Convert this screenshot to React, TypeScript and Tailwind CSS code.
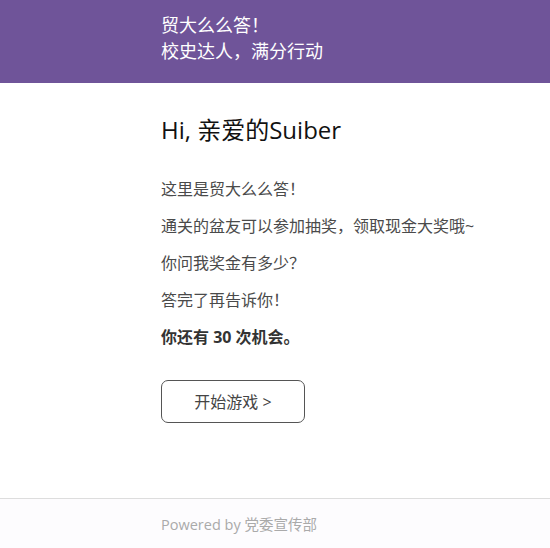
const font = { fontFamily: '"Open Sans", "Noto Sans CJK SC", sans-serif' };

const lines = [
  "这里是贸大么么答！",
  "通关的盆友可以参加抽奖，领取现金大奖哦~",
  "你问我奖金有多少？",
  "答完了再告诉你！",
];

export default function App() {
  return (
    <div className="w-[550px] h-[548px] bg-white flex flex-col" style={font}>
      <header className="h-[83px] bg-[#6f5499] pl-[161px] pt-3 text-[18px] leading-[26px] text-white">
        <div>贸大么么答！</div>
        <div>校史达人，满分行动</div>
      </header>

      <main className="flex-1 pl-[161px] pt-[31px]">
        <h1 className="text-[24px] leading-8 text-[#111]">Hi, 亲爱的Suiber</h1>
        <div className="mt-[31px] flex flex-col gap-[13px] text-[16px] leading-6 text-[#4a4a4a]">
          {lines.map((t) => (
            <p key={t}>{t}</p>
          ))}
          <p className="font-bold text-[#333]">你还有 30 次机会。</p>
        </div>
        <button className="mt-[31px] w-[144px] h-[43px] rounded-[7px] border border-[#555] text-[16px] text-[#444] bg-white">
          开始游戏 &gt;
        </button>
      </main>

      <footer className="h-[50px] border-t border-[#ddd] bg-[#fdfcfe] pl-[161px] pt-4 text-[14.5px] leading-5 text-[#aaa]">
        Powered by 党委宣传部
      </footer>
    </div>
  );
}
